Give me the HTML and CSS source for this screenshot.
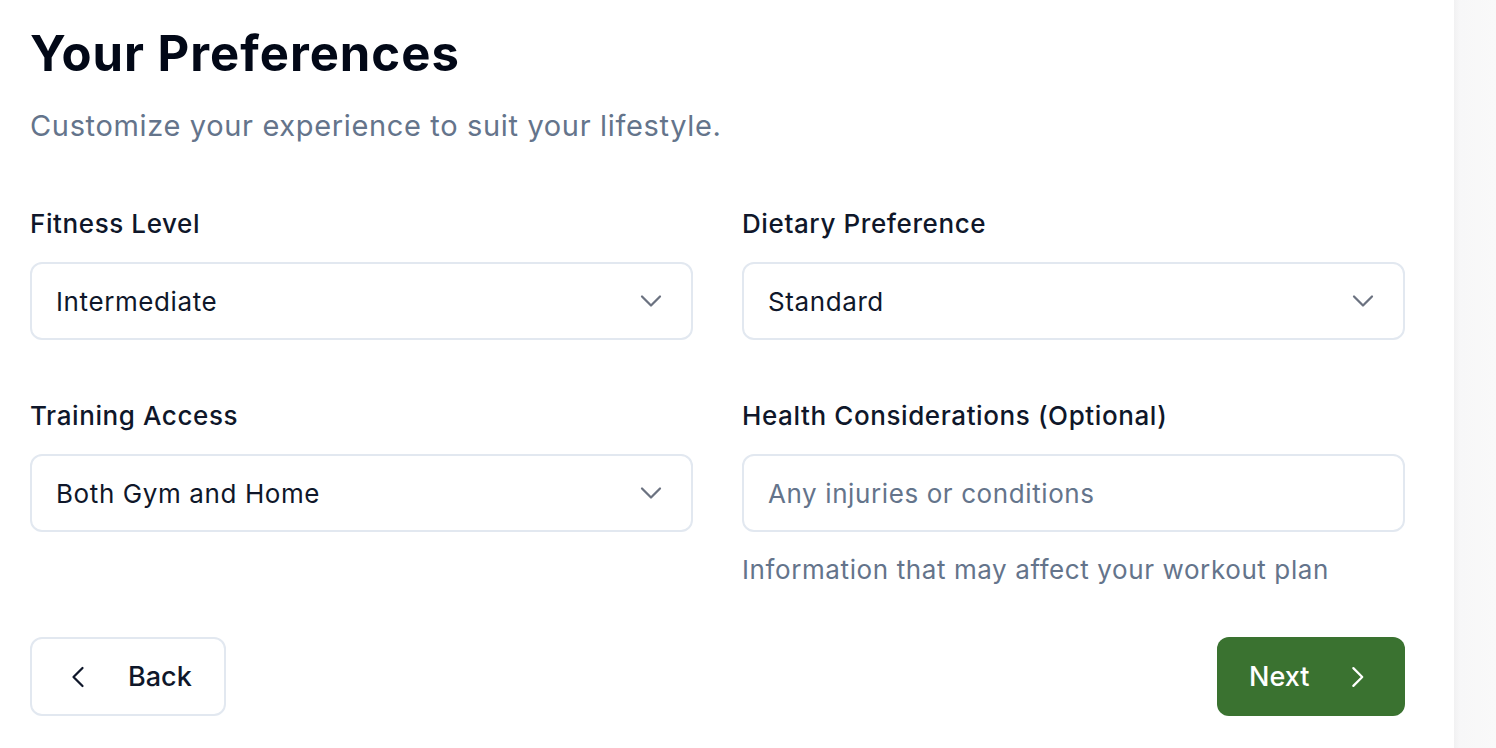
FILE: index.html
```html
<!DOCTYPE html>
<html>
<head>
<meta charset="utf-8">
<link rel="stylesheet" href="styles.css">
</head>
<body>
<div class="page">
  <main class="main">
    <h1 class="title">Your Preferences</h1>
    <p class="subtitle">Customize your experience to suit your lifestyle.</p>
    <div class="grid">
      <div class="field">
        <label class="label">Fitness Level</label>
        <div class="select"><span>Intermediate</span>
          <svg class="chev" viewBox="0 0 24 24" width="36" height="36"><path d="m6 9 6 6 6-6"/></svg>
        </div>
      </div>
      <div class="field">
        <label class="label">Dietary Preference</label>
        <div class="select"><span>Standard</span>
          <svg class="chev" viewBox="0 0 24 24" width="36" height="36"><path d="m6 9 6 6 6-6"/></svg>
        </div>
      </div>
      <div class="field">
        <label class="label">Training Access</label>
        <div class="select"><span>Both Gym and Home</span>
          <svg class="chev" viewBox="0 0 24 24" width="36" height="36"><path d="m6 9 6 6 6-6"/></svg>
        </div>
      </div>
      <div class="field">
        <label class="label">Health Considerations (Optional)</label>
        <div class="select input"><span class="placeholder">Any injuries or conditions</span></div>
        <p class="help">Information that may affect your workout plan</p>
      </div>
    </div>
    <div class="actions">
      <button class="btn btn-back">
        <svg class="bicon" viewBox="0 0 24 24" width="36" height="36"><path d="m15 18-6-6 6-6"/></svg>
        <span>Back</span>
      </button>
      <button class="btn btn-next">
        <span>Next</span>
        <svg class="bicon" viewBox="0 0 24 24" width="36" height="36"><path d="m9 18 6-6-6-6"/></svg>
      </button>
    </div>
  </main>
  <aside class="side"></aside>
</div>
</body>
</html>
```

FILE: styles.css
```css
* { box-sizing: border-box; }
html, body { margin: 0; padding: 0; background: #fff; }
body { font-family: "Inter", "Liberation Sans", sans-serif; color: #0f172a; }
.page { display: flex; width: 1496px; height: 748px; overflow: hidden; }
.main { width: 1454px; padding: 24px 49px 0 30px; background: #fff; }
.side {
  width: 42px;
  background: linear-gradient(to right, #f1f1f2 0px, #f7f7f8 6px, #f9f9f9 100%);
}
.title {
  margin: 0;
  font-family: "Inter", "Liberation Sans", sans-serif;
  font-weight: 700;
  font-size: 49px;
  line-height: 60px;
  color: #020817;
  letter-spacing: 1px;
}
.subtitle {
  margin: 23px 0 0;
  font-size: 29px;
  line-height: 38px;
  letter-spacing: 0.65px;
  color: #64748b;
}
.grid {
  margin-top: 60px;
  display: grid;
  grid-template-columns: 663px 663px;
  column-gap: 49px;
  row-gap: 57px;
  align-items: start;
}
.field { display: flex; flex-direction: column; }
.label {
  font-size: 26px;
  line-height: 36px;
  letter-spacing: 0.6px;
  font-weight: 500;
  color: #0f172a;
  margin-top: 1px;
  margin-bottom: 20px;
}
.select {
  height: 78px;
  border: 2px solid #e2e8f0;
  border-radius: 12px;
  display: flex;
  align-items: center;
  justify-content: space-between;
  padding: 0 22px 0 24px;
  font-size: 26px;
  letter-spacing: 0.6px;
  color: #0f172a;
}
.chev { fill: none; stroke: #6b7280; stroke-width: 1.5; stroke-linecap: round; stroke-linejoin: round; }
.placeholder { color: #64748b; }
.help {
  margin: 20px 0 0;
  font-size: 26px;
  line-height: 36px;
  letter-spacing: 0.6px;
  color: #64748b;
}
.actions {
  margin-top: 49px;
  display: flex;
  justify-content: space-between;
}
.btn {
  height: 79px;
  border-radius: 12px;
  display: flex;
  align-items: center;
  gap: 32px;
  font-family: "Inter", "Liberation Sans", sans-serif;
  font-size: 27px;
  font-weight: 500;
  cursor: pointer;
}
.bicon { fill: none; stroke: currentColor; stroke-width: 1.5; stroke-linecap: round; stroke-linejoin: round; }
.btn-back {
  background: #fff;
  border: 2px solid #e2e8f0;
  color: #0f172a;
  padding: 0 32px 0 28px;
  width: 196px;
}
.btn-next {
  background: #3a7230;
  border: none;
  color: #fff;
  padding: 0 29px 0 32px;
  width: 188px;
  gap: 31px;
}
```
